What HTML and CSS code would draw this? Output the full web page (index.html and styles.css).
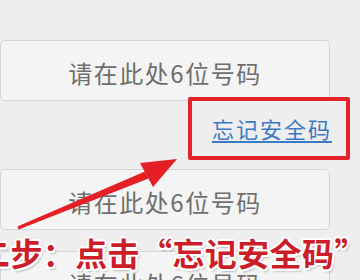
FILE: index.html
```html
<!DOCTYPE html>
<html lang="zh-CN">
<head>
<meta charset="utf-8">
<link rel="stylesheet" href="styles.css">
</head>
<body>
<div class="page">
  <div class="field">请在此处6位号码</div>
  <div class="link-row"><a class="forgot" href="#">忘记安全码</a></div>
  <div class="field">请在此处6位号码</div>
  <div class="field field-last">请在此处6位号码</div>
</div>
<div class="highlight"></div>
<svg class="arrow" width="360" height="280" viewBox="0 0 360 280">
  <polygon points="17.4,226.6 18.6,229.4 148.5,178.5 144.8,171.5" fill="#e41f26"/>
  <polygon points="177,159 140,163 153,187" fill="#e41f26"/>
</svg>
<div class="caption">二步：点击“忘记安全码”</div>
</body>
</html>
```
FILE: styles.css
```css
html, body {
  margin: 0;
  padding: 0;
  background: #eeeeee;
  overflow: hidden;
}
body {
  width: 360px;
  height: 280px;
  position: relative;
  font-family: "Noto Sans CJK SC", "Noto Sans", sans-serif;
}
.page {
  padding-top: 40px;
  width: 330px;
  display: flex;
  flex-direction: column;
}
.field {
  box-sizing: border-box;
  height: 61px;
  border: 1px solid #d4d4d4;
  border-radius: 5px;
  background: #f4f4f4;
  display: flex;
  align-items: center;
  justify-content: center;
  padding-top: 4px;
  font-size: 24px;
  letter-spacing: 1.5px;
  color: #6e6e6e;
}
.field-last {
  margin-top: 21px;
}
.link-row {
  height: 68px;
  box-sizing: border-box;
  padding-top: 16px;
  text-align: right;
  line-height: 22px;
}
.forgot {
  font-size: 22px;
  letter-spacing: 2px;
  color: #3d7ac4;
  text-decoration: underline;
  text-underline-offset: 3px;
  margin-right: -2px;
}
.highlight {
  position: absolute;
  left: 188px;
  top: 97px;
  width: 162px;
  height: 63px;
  box-sizing: border-box;
  border: 4px solid #e3222b;
  border-radius: 2px;
}
.arrow {
  position: absolute;
  left: 0;
  top: 0;
}
.caption {
  position: absolute;
  left: -22px;
  top: 236px;
  white-space: nowrap;
  font-size: 32px;
  line-height: 32px;
  letter-spacing: 0.4px;
  font-weight: 700;
  color: #cc1e2a;
  text-shadow:
    2px 0 0 #fff, -2px 0 0 #fff, 0 2px 0 #fff, 0 -2px 0 #fff,
    1.5px 1.5px 0 #fff, -1.5px 1.5px 0 #fff, 1.5px -1.5px 0 #fff, -1.5px -1.5px 0 #fff,
    2px 3px 2px rgba(0,0,0,0.25);
}
```
